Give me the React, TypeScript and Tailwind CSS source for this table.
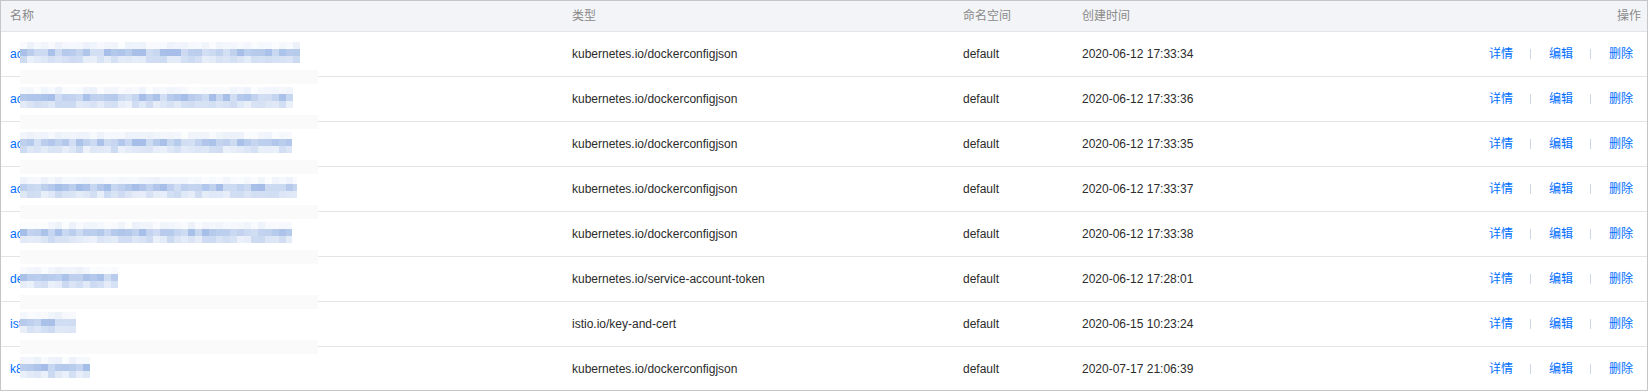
import React from 'react';

type Row = {
  prefix: string;
  blur: number;
  type: string;
  ns: string;
  time: string;
};

const rows: Row[] = [
  { prefix: 'acc', blur: 280, type: 'kubernetes.io/dockerconfigjson', ns: 'default', time: '2020-06-12 17:33:34' },
  { prefix: 'acc', blur: 273, type: 'kubernetes.io/dockerconfigjson', ns: 'default', time: '2020-06-12 17:33:36' },
  { prefix: 'acc', blur: 272, type: 'kubernetes.io/dockerconfigjson', ns: 'default', time: '2020-06-12 17:33:35' },
  { prefix: 'acc', blur: 277, type: 'kubernetes.io/dockerconfigjson', ns: 'default', time: '2020-06-12 17:33:37' },
  { prefix: 'acc', blur: 272, type: 'kubernetes.io/dockerconfigjson', ns: 'default', time: '2020-06-12 17:33:38' },
  { prefix: 'def', blur: 98, type: 'kubernetes.io/service-account-token', ns: 'default', time: '2020-06-12 17:28:01' },
  { prefix: 'ist', blur: 56, type: 'istio.io/key-and-cert', ns: 'default', time: '2020-06-15 10:23:24' },
  { prefix: 'k8s', blur: 70, type: 'kubernetes.io/dockerconfigjson', ns: 'default', time: '2020-07-17 21:06:39' },
];

// small seeded generator so the mosaic looks the same on every load
function rand(seed: number) {
  let s = seed * 9301 + 49297;
  return () => {
    s = (s * 9301 + 49297) % 233280;
    return s / 233280;
  };
}

function mix(t: number) {
  const r = Math.round(255 - (255 - 160) * t);
  const g = Math.round(255 - (255 - 186) * t);
  const b = Math.round(255 - (255 - 230) * t);
  return `rgb(${r},${g},${b})`;
}

function Mosaic({ width, seed }: { width: number; seed: number }) {
  const r = rand(seed);
  const cols = Math.ceil(width / 7);
  const bands = [
    [0, 0.04, 0.2],
    [7, 0.45, 0.95],
    [14, 0.2, 0.55],
  ];
  return (
    <svg width={width} height={21} className="block">
      {bands.map(([y, lo, hi]) =>
        Array.from({ length: cols }, (_, i) => {
          const t = lo + (hi - lo) * r();
          return <rect key={`${y}-${i}`} x={i * 7} y={y} width={7} height={7} fill={mix(t)} />;
        })
      )}
    </svg>
  );
}

function Sep() {
  return <span className="ml-[17px] mr-[18px] h-[10px] w-px bg-[#cdd6e4]" />;
}

function Ops() {
  return (
    <div className="flex items-center justify-end pr-[14px] text-[#006eff]">
      <span>详情</span>
      <Sep />
      <span>编辑</span>
      <Sep />
      <span>删除</span>
    </div>
  );
}

export default function App() {
  const grid = 'grid grid-cols-[562px_391px_119px_1fr_220px] items-center';
  return (
    <div
      className="h-[391px] w-[1648px] overflow-hidden border border-[#c6c6c6] bg-white text-[12px] text-[#2b2b2b]"
      style={{ fontFamily: '"Liberation Sans", "Noto Sans CJK SC", sans-serif' }}
    >
      <div className={`${grid} h-[31px] border-b border-[#e2e4e8] bg-[#f3f4f7] text-[#8a8a8a]`}>
        <div className="pl-[9px]">名称</div>
        <div className="pl-[9px]">类型</div>
        <div className="pl-[9px]">命名空间</div>
        <div className="pl-[9px]">创建时间</div>
        <div className="pr-[6px] text-right">操作</div>
      </div>
      {rows.map((row, i) => (
        <div
          key={i}
          className={`${grid} ${i === rows.length - 1 ? 'h-[44px]' : 'h-[45px] border-b border-[#e2e4e8]'}`}
        >
          <div className="relative h-full pl-[9px]">
            <span className="absolute left-[9px] top-1/2 -translate-y-1/2 text-[#006eff]">{row.prefix}</span>
            <div className="absolute left-[19px] top-[10px]">
              <Mosaic width={row.blur} seed={i * 17 + 3} />
            </div>
            {i < rows.length - 1 && (
              <div className="absolute -bottom-[8px] left-[19px] z-10 h-[14px] w-[298px] bg-[#fafafa]" />
            )}
          </div>
          <div className="pl-[9px]">{row.type}</div>
          <div className="pl-[9px]">{row.ns}</div>
          <div className="pl-[9px]">{row.time}</div>
          <Ops />
        </div>
      ))}
    </div>
  );
}
